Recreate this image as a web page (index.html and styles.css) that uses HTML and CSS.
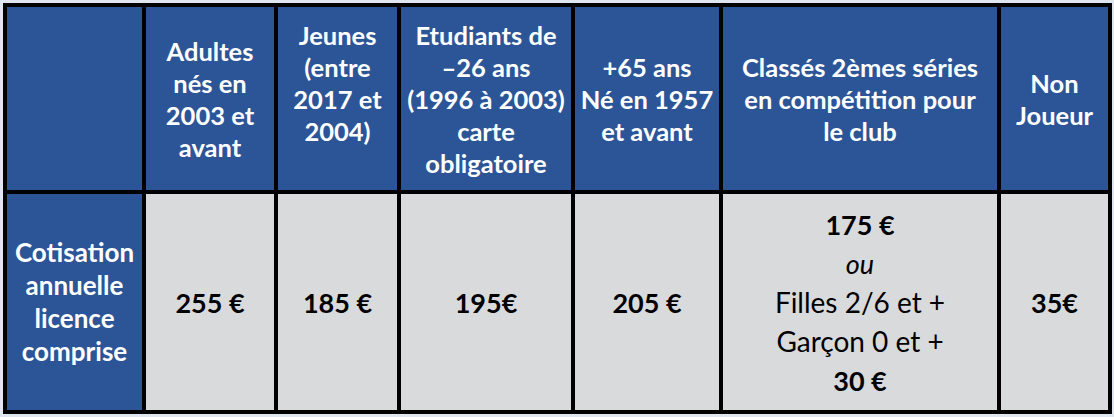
FILE: index.html
```html
<!DOCTYPE html>
<html lang="fr">
<head>
<meta charset="utf-8">
<title>Tarifs</title>
<link rel="stylesheet" href="styles.css">
</head>
<body>
<table class="tarifs">
  <colgroup>
    <col class="c1"><col class="c2"><col class="c3"><col class="c4"><col class="c5"><col class="c6"><col class="c7">
  </colgroup>
  <tr class="head">
    <th></th>
    <th>Adultes<br>nés en<br>2003 et<br>avant</th>
    <th>Jeunes<br>(entre<br>2017 et<br>2004)<br>&nbsp;</th>
    <th>Etudiants de<br>–26 ans<br>(1996 à 2003)<br>carte<br>obligatoire</th>
    <th>+65 ans<br>Né en 1957<br>et avant</th>
    <th>Classés 2èmes séries<br>en compétition pour<br>le club</th>
    <th>Non<br>Joueur</th>
  </tr>
  <tr class="body">
    <th class="label">Cotisation<br>annuelle<br>licence<br>comprise</th>
    <td><b>255 €</b></td>
    <td><b>185 €</b></td>
    <td><b>195€</b></td>
    <td><b>205 €</b></td>
    <td class="multi">
      <p><b>175 €</b></p>
      <p><i>ou</i></p>
      <p class="plain">Filles 2/6 et +</p>
      <p class="plain">Garçon 0 et +</p>
      <p><b>30 €</b></p>
    </td>
    <td><b>35€</b></td>
  </tr>
</table>
</body>
</html>
```

FILE: styles.css
```css
html, body {
  margin: 0;
  padding: 0;
  background: #dfe6f0;
}
body {
  padding: 3px;
  font-family: Lato, "Open Sans", sans-serif;
}
.tarifs {
  table-layout: fixed;
  border-collapse: separate;
  border-spacing: 4px;
  background: #000;
  width: 1109px;
}
.c1 { width: 135px; }
.c2 { width: 128px; }
.c3 { width: 119px; }
.c4 { width: 170px; }
.c5 { width: 144px; }
.c6 { width: 274px; }
.c7 { width: 107px; }
.tarifs th, .tarifs td {
  padding: 0;
  text-align: center;
  vertical-align: middle;
  white-space: nowrap;
}
.head th {
  height: 183px;
  background: #2b5597;
  color: #fff;
  font-weight: 700;
  font-size: 25.5px;
  line-height: 32px;
}
.body th, .body td {
  height: 216px;
}
.body .label {
  background: #2b5597;
  color: #fff;
  font-weight: 700;
  font-size: 26px;
  line-height: 33px;
}
.body td {
  background: #d9dadc;
  color: #000;
  font-size: 27px;
  line-height: 33px;
}
.body td b { font-weight: 700; }
.multi p {
  margin: 0;
  line-height: 39px;
}
.multi .plain { font-size: 28px; }
.multi i { font-style: italic; }
```
